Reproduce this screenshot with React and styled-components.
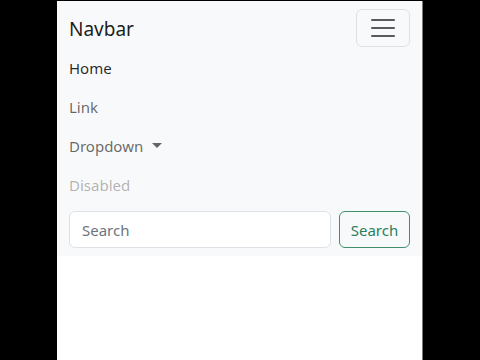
import React from 'react';
import styled, { createGlobalStyle } from 'styled-components';

const GlobalStyle = createGlobalStyle`
	html, body {
		margin: 0;
		padding: 0;
		background: #000;
	}
	* {
		box-sizing: border-box;
	}
`;

const Frame = styled.div`
	width: 366px;
	height: 359px;
	margin: 1px 0 0 57px;
	background: #fff;
	border-right: 1px solid #7a7a7a;
	font-family: 'Noto Sans', 'Open Sans', sans-serif;
	overflow: hidden;
`;

const Bar = styled.nav`
	background: #f8f9fa;
	padding: 8px 12px 8px 12px;
	display: flex;
	flex-direction: column;
`;

const TopRow = styled.div`
	display: flex;
	align-items: center;
	justify-content: space-between;
`;

const Brand = styled.a`
	font-size: 19px;
	color: rgba(0, 0, 0, 0.9);
	text-decoration: none;
	line-height: 1.5;
	padding-top: 3px;
`;

const Toggler = styled.button`
	width: 54px;
	height: 38px;
	padding: 0;
	background: transparent;
	border: 1px solid rgba(0, 0, 0, 0.1);
	border-radius: 6px;
	display: flex;
	align-items: center;
	justify-content: center;
`;

const NavList = styled.ul`
	list-style: none;
	margin: 1px 0 0;
	padding: 0;
	display: flex;
	flex-direction: column;
`;

const NavLink = styled.a`
	display: flex;
	align-items: center;
	gap: 8px;
	height: 39px;
	font-size: 15px;
	text-decoration: none;
	color: ${p =>
		p.$active ? 'rgba(0,0,0,0.85)' : p.$disabled ? 'rgba(0,0,0,0.3)' : 'rgba(0,0,0,0.6)'};
`;

const Caret = styled.span`
	width: 0;
	height: 0;
	border-left: 5px solid transparent;
	border-right: 5px solid transparent;
	border-top: 5px solid rgba(0, 0, 0, 0.6);
	margin-left: 1px;
`;

const SearchForm = styled.form`
	display: flex;
	gap: 8px;
	margin-top: 7px;
`;

const SearchInput = styled.input`
	flex: 1;
	height: 37px;
	padding: 0 12px;
	font-family: inherit;
	font-size: 15px;
	color: #212529;
	background: #fff;
	border: 1px solid #dee2e6;
	border-radius: 6px;
	&::placeholder {
		color: #6c757d;
	}
`;

const SearchButton = styled.button`
	width: 71px;
	height: 37px;
	font-family: inherit;
	font-size: 15px;
	color: #2a7f5c;
	background: transparent;
	border: 1px solid #3f8f6c;
	border-radius: 6px;
`;

const Burger = () => (
	<svg width="30" height="30" viewBox="0 0 30 30">
		<path
			d="M4 7h22M4 15h22M4 23h22"
			stroke="rgba(33,37,41,0.75)"
			strokeWidth="2"
			strokeLinecap="round"
		/>
	</svg>
);

const App = () => (
	<>
		<GlobalStyle />
		<Frame>
			<Bar>
				<TopRow>
					<Brand href="#">Navbar</Brand>
					<Toggler type="button">
						<Burger />
					</Toggler>
				</TopRow>
				<NavList>
					<li>
						<NavLink href="#" $active>
							Home
						</NavLink>
					</li>
					<li>
						<NavLink href="#">Link</NavLink>
					</li>
					<li>
						<NavLink href="#">
							Dropdown <Caret />
						</NavLink>
					</li>
					<li>
						<NavLink $disabled>Disabled</NavLink>
					</li>
				</NavList>
				<SearchForm onSubmit={e => e.preventDefault()}>
					<SearchInput type="search" placeholder="Search" />
					<SearchButton type="submit">Search</SearchButton>
				</SearchForm>
			</Bar>
		</Frame>
	</>
);

export default App;
